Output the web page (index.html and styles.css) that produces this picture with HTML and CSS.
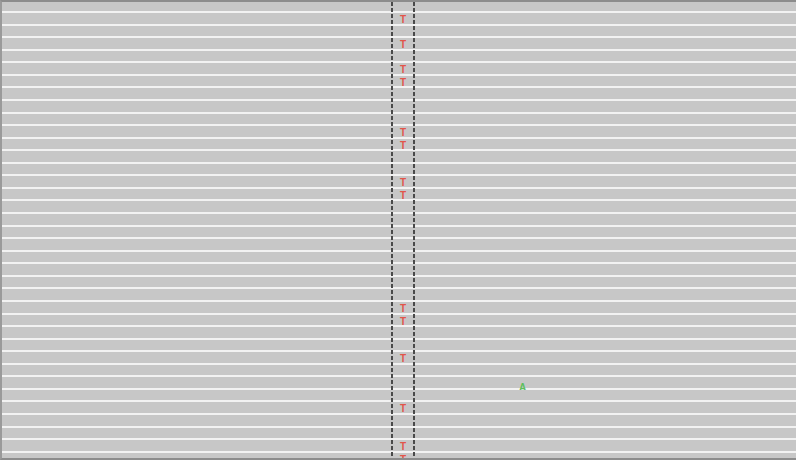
FILE: index.html
```html
<!DOCTYPE html>
<html>
<head>
<meta charset="utf-8">
<link rel="stylesheet" href="styles.css">
</head>
<body>
<div class="viewer">
  <div class="rows">
    <div class="row first"><span></span><span class="base"></span><span></span></div>
    <div class="row"><span></span><span class="base t">T</span><span></span></div>
    <div class="row"><span></span><span class="base"></span><span></span></div>
    <div class="row"><span></span><span class="base t">T</span><span></span></div>
    <div class="row"><span></span><span class="base"></span><span></span></div>
    <div class="row"><span></span><span class="base t">T</span><span></span></div>
    <div class="row"><span></span><span class="base t">T</span><span></span></div>
    <div class="row"><span></span><span class="base"></span><span></span></div>
    <div class="row"><span></span><span class="base"></span><span></span></div>
    <div class="row"><span></span><span class="base"></span><span></span></div>
    <div class="row"><span></span><span class="base t">T</span><span></span></div>
    <div class="row"><span></span><span class="base t">T</span><span></span></div>
    <div class="row"><span></span><span class="base"></span><span></span></div>
    <div class="row"><span></span><span class="base"></span><span></span></div>
    <div class="row"><span></span><span class="base t">T</span><span></span></div>
    <div class="row"><span></span><span class="base t">T</span><span></span></div>
    <div class="row"><span></span><span class="base"></span><span></span></div>
    <div class="row"><span></span><span class="base"></span><span></span></div>
    <div class="row"><span></span><span class="base"></span><span></span></div>
    <div class="row"><span></span><span class="base"></span><span></span></div>
    <div class="row"><span></span><span class="base"></span><span></span></div>
    <div class="row"><span></span><span class="base"></span><span></span></div>
    <div class="row"><span></span><span class="base"></span><span></span></div>
    <div class="row"><span></span><span class="base"></span><span></span></div>
    <div class="row"><span></span><span class="base t">T</span><span></span></div>
    <div class="row"><span></span><span class="base t">T</span><span></span></div>
    <div class="row"><span></span><span class="base"></span><span></span></div>
    <div class="row"><span></span><span class="base"></span><span></span></div>
    <div class="row"><span></span><span class="base t">T</span><span></span></div>
    <div class="row"><span></span><span class="base"></span><span></span></div>
    <div class="row"><span></span><span class="base"></span><span class="right"><span class="a">A</span></span></div>
    <div class="row"><span></span><span class="base"></span><span></span></div>
    <div class="row"><span></span><span class="base t">T</span><span></span></div>
    <div class="row"><span></span><span class="base"></span><span></span></div>
    <div class="row"><span></span><span class="base"></span><span></span></div>
    <div class="row"><span></span><span class="base t">T</span><span></span></div>
    <div class="row"><span></span><span class="base t">T</span><span></span></div>
  </div>
  <div class="guide left-guide"></div>
  <div class="guide right-guide"></div>
</div>
</body>
</html>
```

FILE: styles.css
```css
html, body {
  margin: 0;
  padding: 0;
  background: #c7c7c7;
}
.viewer {
  position: relative;
  width: 796px;
  height: 460px;
  overflow: hidden;
  box-sizing: border-box;
  border-top: 2px solid #8c8c8c;
  border-left: 2px solid #9a9a9a;
  border-bottom: 2px solid #8c8c8c;
  background: #f2f2f2;
  font-family: "Liberation Sans", Arial, sans-serif;
}
.rows {
  display: flex;
  flex-direction: column;
  gap: 2px;
}
.row {
  flex: none;
  height: 10.57px;
  background: #c7c7c7;
  display: grid;
  grid-template-columns: 389px 24px 1fr;
  align-items: center;
}
.row.first {
  height: 9px;
}
.base {
  text-align: center;
  font-size: 10px;
  line-height: 10px;
  font-weight: bold;
  padding-top: 2px;
}
.t {
  color: #e2554a;
}
.right {
  padding-left: 104px;
  font-size: 10px;
  line-height: 10px;
  font-weight: bold;
  padding-top: 6px;
}
.a {
  color: #5cbf5c;
}
.guide {
  position: absolute;
  top: 0;
  bottom: 0;
  width: 2px;
  background: repeating-linear-gradient(to bottom, #4a4a4a 0, #4a4a4a 4px, transparent 4px, transparent 6px);
}
.left-guide {
  left: 389px;
}
.right-guide {
  left: 411px;
}
```
